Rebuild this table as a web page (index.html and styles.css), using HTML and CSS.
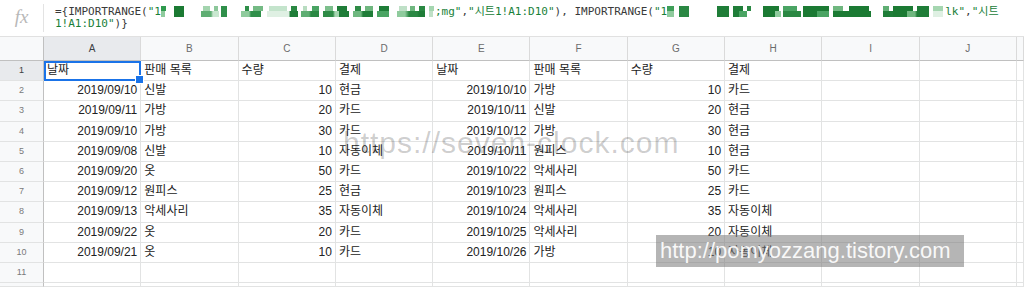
FILE: index.html
```html
<!DOCTYPE html>
<html lang="ko">
<head>
<meta charset="utf-8">
<title>IMPORTRANGE</title>
<link rel="stylesheet" href="styles.css">
</head>
<body>
<div class="formula-bar">
  <div class="fx">fx</div>
  <div class="sep"></div>
  <div class="formula">
    <div class="fline">={IMPORTRANGE(<span class="str">"1</span><span class="mz mz1"></span><span class="str">;mg"</span>,<span class="str">"시트1!A1:D10"</span>), IMPORTRANGE(<span class="str">"1</span><span class="mz mz2"></span><span class="str">lk"</span>,<span class="str">"시트</span></div>
    <div class="fline"><span class="str">1!A1:D10"</span>)}</div>
  </div>
</div>

<div class="sheet">
  <div class="corner"></div>
  <div class="ch hl">A</div><div class="ch">B</div><div class="ch">C</div><div class="ch">D</div><div class="ch">E</div><div class="ch">F</div><div class="ch">G</div><div class="ch">H</div><div class="ch">I</div><div class="ch">J</div><div class="ch"></div>

  <div class="rh hl">1</div>
  <div class="c sel">날짜</div><div class="c">판매 목록</div><div class="c">수량</div><div class="c">결제</div><div class="c">날짜</div><div class="c">판매 목록</div><div class="c">수량</div><div class="c">결제</div><div class="c"></div><div class="c"></div><div class="c"></div>

  <div class="rh">2</div>
  <div class="c r">2019/09/10</div><div class="c">신발</div><div class="c r">10</div><div class="c">현금</div><div class="c r">2019/10/10</div><div class="c">가방</div><div class="c r">10</div><div class="c">카드</div><div class="c"></div><div class="c"></div><div class="c"></div>

  <div class="rh">3</div>
  <div class="c r">2019/09/11</div><div class="c">가방</div><div class="c r">20</div><div class="c">카드</div><div class="c r">2019/10/11</div><div class="c">신발</div><div class="c r">20</div><div class="c">현금</div><div class="c"></div><div class="c"></div><div class="c"></div>

  <div class="rh">4</div>
  <div class="c r">2019/09/10</div><div class="c">가방</div><div class="c r">30</div><div class="c">카드</div><div class="c r">2019/10/12</div><div class="c">가방</div><div class="c r">30</div><div class="c">현금</div><div class="c"></div><div class="c"></div><div class="c"></div>

  <div class="rh">5</div>
  <div class="c r">2019/09/08</div><div class="c">신발</div><div class="c r">10</div><div class="c">자동이체</div><div class="c r">2019/10/11</div><div class="c">원피스</div><div class="c r">10</div><div class="c">현금</div><div class="c"></div><div class="c"></div><div class="c"></div>

  <div class="rh">6</div>
  <div class="c r">2019/09/20</div><div class="c">옷</div><div class="c r">50</div><div class="c">카드</div><div class="c r">2019/10/22</div><div class="c">악세사리</div><div class="c r">50</div><div class="c">카드</div><div class="c"></div><div class="c"></div><div class="c"></div>

  <div class="rh">7</div>
  <div class="c r">2019/09/12</div><div class="c">원피스</div><div class="c r">25</div><div class="c">현금</div><div class="c r">2019/10/23</div><div class="c">원피스</div><div class="c r">25</div><div class="c">카드</div><div class="c"></div><div class="c"></div><div class="c"></div>

  <div class="rh">8</div>
  <div class="c r">2019/09/13</div><div class="c">악세사리</div><div class="c r">35</div><div class="c">자동이체</div><div class="c r">2019/10/24</div><div class="c">악세사리</div><div class="c r">35</div><div class="c">자동이체</div><div class="c"></div><div class="c"></div><div class="c"></div>

  <div class="rh">9</div>
  <div class="c r">2019/09/22</div><div class="c">옷</div><div class="c r">20</div><div class="c">카드</div><div class="c r">2019/10/25</div><div class="c">악세사리</div><div class="c r">20</div><div class="c">자동이체</div><div class="c"></div><div class="c"></div><div class="c"></div>

  <div class="rh">10</div>
  <div class="c r">2019/09/21</div><div class="c">옷</div><div class="c r">10</div><div class="c">카드</div><div class="c r">2019/10/26</div><div class="c">가방</div><div class="c r">10</div><div class="c">자동이체</div><div class="c"></div><div class="c"></div><div class="c"></div>

  <div class="rh">11</div>
  <div class="c"></div><div class="c"></div><div class="c"></div><div class="c"></div><div class="c"></div><div class="c"></div><div class="c"></div><div class="c"></div><div class="c"></div><div class="c"></div><div class="c"></div>

  <div class="rh"></div>
  <div class="c"></div><div class="c"></div><div class="c"></div><div class="c"></div><div class="c"></div><div class="c"></div><div class="c"></div><div class="c"></div><div class="c"></div><div class="c"></div><div class="c"></div>
</div>

<div class="wm1">https://seven-clock.com</div>
<div class="wm2">http://pomyozzang.tistory.com</div>
</body>
</html>
```
FILE: styles.css
```css
* { box-sizing: border-box; }
html, body { margin: 0; padding: 0; }
body {
  width: 1024px;
  height: 287px;
  overflow: hidden;
  background: #fff;
  position: relative;
  font-family: "Liberation Sans", "Noto Sans CJK KR", sans-serif;
  color: #222;
}

/* formula bar */
.formula-bar {
  display: flex;
  height: 37px;
  border-bottom: 1px solid #e1e1e1;
}
.fx {
  width: 43px;
  display: flex;
  align-items: center;
  justify-content: center;
  font-family: "Liberation Serif", serif;
  font-style: italic;
  font-size: 19px;
  color: #b8b8b8;
  padding-bottom: 2px;
}
.sep {
  width: 1px;
  background: #e3e3e3;
  margin: 4px 0;
}
.formula {
  padding: 6px 0 0 11px;
  font-family: "DejaVu Sans Mono", "Noto Sans CJK KR", monospace;
  font-size: 11px;
  line-height: 12px;
  color: #3a3a3a;
}
.fline { white-space: nowrap; }
.str { color: #188038; }
.mz {
  display: inline-block;
  height: 11px;
  vertical-align: -2px;
  background-repeat: no-repeat;
  background-size: 100% 5px, 100% 6px;
  background-position: 0 0, 0 5px;
}
.mz1 {
  width: 274px;
  background-image:
    linear-gradient(to right, #2f9a4e 0 5px, transparent 5px 13px, #1b7a33 13px 23px, transparent 23px 42px, #a3d4ae 42px 49px, transparent 49px 53px, #8cc79a 53px 57px, transparent 57px 60px, #2f8f4a 60px 66px, transparent 66px 84px, #2f8f4a 84px 88px, transparent 88px 92px, #74ba84 92px 102px, transparent 102px 108px, #c4e4cc 108px 126px, transparent 126px 130px, #2a8843 130px 136px, transparent 136px 142px, #b8dcc0 142px 146px, transparent 146px 151px, #4aa463 151px 158px, transparent 158px 164px, #7cbf8c 164px 172px, transparent 172px 176px, #1f7d38 176px 186px, transparent 186px 194px, #2e8b46 194px 200px, transparent 200px 204px, #6fb77f 204px 212px, transparent 212px 218px, #1f7d38 218px 228px, transparent 228px 238px, #bfe0c7 238px 246px, transparent 246px 249px, #6fb77f 249px 254px, transparent 254px 258px, #2a8843 258px 264px, transparent 264px 268px, #a5d6b0 268px 273px, transparent 273px),
    linear-gradient(to right, #8fcb9d 0 4px, transparent 4px 13px, #1b7a33 13px 23px, transparent 23px 40px, #5fae73 40px 50px, #c9e7d0 52px 58px, transparent 58px 60px, #2f8f4a 60px 66px, transparent 66px 80px, #8fcb9d 80px 88px, #2f8f4a 90px 100px, transparent 100px 106px, #dff0e3 106px 128px, #1f7d38 129px 137px, transparent 137px 140px, #5fae73 140px 148px, #2a8843 150px 158px, transparent 158px 162px, #2e8b46 162px 172px, #a5d6b0 174px 178px, #1f7d38 178px 188px, transparent 188px 192px, #6fb77f 192px 200px, #1f7d38 202px 212px, transparent 212px 216px, #4aa463 216px 228px, transparent 228px 236px, #8fcb9d 236px 244px, #2a8843 248px 256px, #1f7d38 258px 264px, transparent 264px 268px, #bfe0c7 268px 272px, transparent 272px);
}
.mz2 {
  width: 278px;
  background-image:
    linear-gradient(to right, #3e9f58 2px 7px, transparent 7px 12px, #2a8843 12px 22px, transparent 22px 50px, #1f7d38 50px 62px, transparent 62px 66px, #1f7d38 66px 76px, transparent 76px 80px, #2a8843 80px 84px, transparent 84px 96px, #1b7a33 96px 112px, transparent 112px 116px, #4aa463 116px 130px, transparent 130px 136px, #1b7a33 136px 162px, transparent 162px 166px, #6fb77f 166px 176px, transparent 176px 182px, #1b7a33 182px 202px, transparent 202px 216px, #5fae73 216px 222px, transparent 222px 226px, #1b7a33 226px 246px, transparent 246px 250px, #1f7d38 250px 262px, transparent 262px 266px, #a5d6b0 266px 276px, transparent 276px),
    linear-gradient(to right, #8fcb9d 2px 7px, transparent 7px 12px, #2a8843 12px 22px, transparent 22px 50px, #1f7d38 50px 62px, transparent 62px 66px, #1f7d38 66px 72px, #4aa463 72px 80px, transparent 80px 96px, #1b7a33 96px 108px, #8fcb9d 108px 114px, transparent 114px 116px, #2a8843 116px 134px, transparent 134px 136px, #1b7a33 136px 150px, #4aa463 150px 162px, transparent 162px 166px, #1b7a33 166px 182px, #1b7a33 182px 204px, transparent 204px 216px, #1f7d38 216px 226px, #1b7a33 226px 240px, #6fb77f 240px 248px, #1f7d38 250px 262px, transparent 262px 266px, #dff0e3 266px 276px, transparent 276px);
}

/* sheet grid */
.sheet {
  display: grid;
  grid-template-columns: 44px repeat(10, 97.3px) 1fr;
  grid-template-rows: 24px repeat(11, 20.2px) 4px;
}
.corner {
  background: #f8f9fa;
  border-right: 1px solid #c0c0c0;
  border-bottom: 1px solid #c0c0c0;
}
.ch {
  background: #f8f9fa;
  border-right: 1px solid #dadada;
  border-bottom: 1px solid #c0c0c0;
  font-size: 10px;
  line-height: 23px;
  color: #6b6b6b;
  text-align: center;
}
.rh {
  background: #f8f9fa;
  border-right: 1px solid #c0c0c0;
  border-bottom: 1px solid #e2e3e3;
  font-size: 9px;
  line-height: 19px;
  color: #7a7a7a;
  text-align: center;
}
.hl { background: #e8eaed; color: #3c4043; }
.c {
  border-right: 1px solid #e2e3e3;
  border-bottom: 1px solid #e2e3e3;
  font-size: 12px;
  line-height: 19px;
  padding: 0 3px;
  white-space: nowrap;
  overflow: hidden;
  color: #222;
}
.r { text-align: right; }
.sel { position: relative; overflow: visible; }
.sel::after {
  content: "";
  position: absolute;
  left: 0;
  top: 0;
  right: -1px;
  bottom: -1px;
  border: 2px solid #1a73e8;
}
.sel::before {
  content: "";
  position: absolute;
  right: -4px;
  bottom: -4px;
  width: 7px;
  height: 7px;
  background: #1a73e8;
  border: 1px solid #fff;
  z-index: 2;
}

/* watermarks overlaid on the sheet */
.wm1 {
  position: absolute;
  left: 343px;
  top: 128px;
  font-family: "Liberation Sans", sans-serif;
  font-size: 30px;
  line-height: 30px;
  letter-spacing: 1px;
  color: rgba(0, 0, 0, 0.2);
  white-space: nowrap;
}
.wm2 {
  position: absolute;
  left: 656px;
  top: 235px;
  width: 308px;
  height: 32px;
  padding-left: 4px;
  background: rgba(120, 120, 120, 0.55);
  color: rgba(255, 255, 255, 0.92);
  font-family: "Liberation Sans", sans-serif;
  font-size: 22px;
  line-height: 32px;
  white-space: nowrap;
}
```
